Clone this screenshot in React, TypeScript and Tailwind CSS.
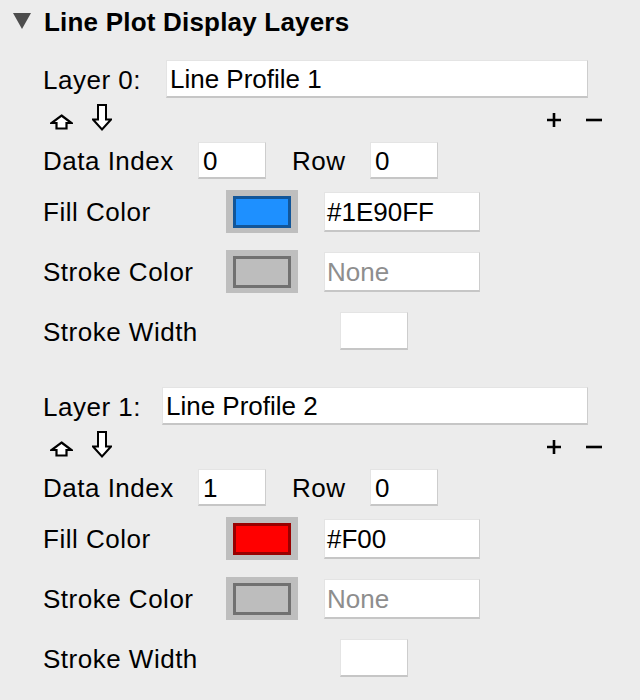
import React from "react";

interface LayerProps {
  index: number;
  name: string;
  dataIndex: string;
  row: string;
  fill: string;
  hex: string;
  gap: string;
}

const inputCls =
  "flex items-center pt-[2px] bg-white border border-[#e4e4e4] border-r-[#cdcdcd] border-b-[2px] border-b-[#c6c6c6]";

function UpArrow() {
  return (
    <svg width="23" height="16" viewBox="0 0 23 16" className="mb-[1px]">
      <polygon
        points="11.5,1.5 21.5,9 16.5,9 16.5,14.5 6.5,14.5 6.5,9 1.5,9"
        fill="white"
        stroke="black"
        strokeWidth="2.2"
        strokeLinejoin="miter"
      />
    </svg>
  );
}

function DownArrow() {
  return (
    <svg width="20" height="27" viewBox="0 0 20 27">
      <polygon
        points="6,1 14,1 14,15.5 19,15.5 10,25.5 1,15.5 6,15.5"
        fill="white"
        stroke="black"
        strokeWidth="2"
        strokeLinejoin="miter"
      />
    </svg>
  );
}

function Swatch({ color }: { color: string }) {
  return (
    <div className="flex h-[43px] w-[72px] items-start bg-[#bebebe] pl-[7px] pt-[6px]">
      <div
        className="h-[32px] w-[58px] border-[3px] border-black/40"
        style={{ backgroundColor: color }}
      />
    </div>
  );
}

function Layer({ index, name, dataIndex, row, fill, hex, gap }: LayerProps) {
  return (
    <div className="flex flex-col">
      <div className="flex h-[38px] items-center pl-[43px] pr-[52px]">
        <span className="pt-[2px] tracking-[0.5px]">Layer {index}:</span>
        <div className={`${inputCls} ${gap} h-[38px] flex-1 pl-[3px]`}>
          {name}
        </div>
      </div>

      <div className="mt-[7px] flex h-[26px] items-end pl-[50px] pr-[38px]">
        <UpArrow />
        <div className="ml-[19px]">
          <DownArrow />
        </div>
        <div className="ml-auto flex items-center gap-[24px] self-center pt-[4px]">
          <svg width="16" height="14" viewBox="0 0 16 14">
            <path d="M8 0 V14 M1 7 H15" stroke="black" strokeWidth="2.6" />
          </svg>
          <svg width="16" height="14" viewBox="0 0 16 14">
            <path d="M0 7 H16" stroke="black" strokeWidth="2.6" />
          </svg>
        </div>
      </div>

      <div className="mt-[11px] flex h-[37px] items-center pl-[43px]">
        <span className="w-[155px] pt-[2px] tracking-[0.5px]">Data Index</span>
        <div className={`${inputCls} h-[37px] w-[68px] pl-[4px]`}>
          {dataIndex}
        </div>
        <span className="ml-[26px] w-[78px] pt-[2px] tracking-[0.5px]">Row</span>
        <div className={`${inputCls} h-[37px] w-[68px] pl-[4px]`}>{row}</div>
      </div>

      <div className="mt-[11px] flex h-[43px] items-center pl-[43px]">
        <span className="w-[183px] pt-[2px] tracking-[0.5px]">Fill Color</span>
        <Swatch color={fill} />
        <div className={`${inputCls} ml-[26px] h-[40px] w-[156px] pl-[2px]`}>
          {hex}
        </div>
      </div>

      <div className="mt-[17px] flex h-[43px] items-center pl-[43px]">
        <span className="w-[183px] pt-[2px] tracking-[0.5px]">Stroke Color</span>
        <Swatch color="#bdbdbd" />
        <div
          className={`${inputCls} ml-[26px] h-[40px] w-[156px] pl-[2px] text-[#8e8e8e]`}
        >
          None
        </div>
      </div>

      <div className="mt-[19px] flex h-[38px] items-center pl-[43px]">
        <span className="w-[297px] pt-[2px] tracking-[0.5px]">Stroke Width</span>
        <div className={`${inputCls} h-[38px] w-[68px]`} />
      </div>
    </div>
  );
}

export default function App() {
  return (
    <div className="h-[700px] w-[640px] overflow-hidden bg-[#ececec] font-['Liberation_Sans',Arial,sans-serif] text-[26px] leading-[29px] text-black">
      <div className="mt-[8px] flex h-[28px] items-start pl-[12px]">
        <svg width="20" height="18" viewBox="0 0 20 18" className="mt-[4px]">
          <polygon points="1,1 19,1 10,17" fill="#4d4d4d" />
        </svg>
        <h2 className="ml-[12px] font-bold tracking-[0.2px]">
          Line Plot Display Layers
        </h2>
      </div>

      <div className="mt-[24px] flex flex-col gap-[37px]">
        <Layer
          index={0}
          name="Line Profile 1"
          dataIndex="0"
          row="0"
          fill="#1E90FF"
          hex="#1E90FF"
          gap="ml-[25px]"
        />
        <Layer
          index={1}
          name="Line Profile 2"
          dataIndex="1"
          row="0"
          fill="#FF0000"
          hex="#F00"
          gap="ml-[21px]"
        />
      </div>
    </div>
  );
}
